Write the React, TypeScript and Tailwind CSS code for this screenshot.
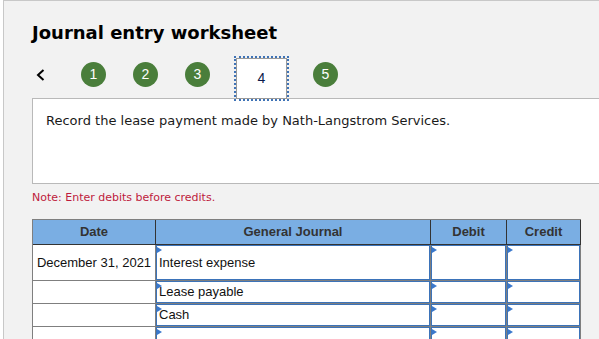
import React from 'react';

const rows = [
    { date: 'December 31, 2021', account: 'Interest expense', tall: true },
    { date: '', account: 'Lease payable', tall: false },
    { date: '', account: 'Cash', tall: false },
    { date: '', account: '', tall: false },
];

const Flag: React.FC = () => (
    <span className="absolute left-0 top-[1px] w-0 h-0 border-y-[3px] border-y-transparent border-l-[5px] border-l-[#3a78cc]"></span>
);

const InputCell: React.FC<{ text?: string; width: string }> = ({ text, width }) => (
    <div className={`${width} border-r border-b border-[#7f7f7f] h-full`}>
        <div className="relative h-full border border-[#3b73b9] flex items-center pl-[2px] text-[13px] text-[#111]">
            <Flag />
            {text}
        </div>
    </div>
);

const App: React.FC = () => {
    return (
        <div className="w-[599px] h-[339px] overflow-hidden bg-white font-['DejaVu_Sans',sans-serif]">
            <div className="ml-[3px] h-full border-l border-t border-[#c8c8c8] bg-[#f2f2f2] pl-[28px]">
                <h1 className="mt-[21px] text-[18px] leading-[22px] font-bold text-black">Journal entry worksheet</h1>

                <div className="relative z-10 mt-[14px] h-[40px] flex items-start">
                    <svg className="mt-[11px] ml-[4px]" width="9" height="12" viewBox="0 0 9 12">
                        <polyline points="7.5,1 2,6 7.5,11" fill="none" stroke="#000" strokeWidth="2" />
                    </svg>
                    {[1, 2, 3].map((n) => (
                        <div
                            key={n}
                            className={`${n === 1 ? 'ml-[36px]' : 'ml-[27px]'} mt-[4px] w-[25px] h-[25px] rounded-full bg-[#4a7e3b] text-white text-[14px] flex items-center justify-center font-['Liberation_Sans',sans-serif]`}
                        >
                            {n}
                        </div>
                    ))}
                    <div className="ml-[26px] w-[51px] h-[41px] bg-white border border-[#9a9a9a] outline-2 outline-dotted outline-[#3f73b6] flex items-center justify-center text-[14px] text-[#0b1a4a] font-['Liberation_Sans',sans-serif]">
                        4
                    </div>
                    <div className="ml-[26px] mt-[4px] w-[25px] h-[25px] rounded-full bg-[#4a7e3b] text-white text-[14px] flex items-center justify-center font-['Liberation_Sans',sans-serif]">
                        5
                    </div>
                </div>

                <div className="w-[600px] h-[86px] bg-white border border-[#b9b9b9] pl-[13px] pt-[14px] text-[13px] leading-[16px] text-[#1a1a1a]">
                    Record the lease payment made by Nath-Langstrom Services.
                </div>

                <p className="mt-[7px] text-[11px] leading-[14px] text-[#be1a3c]">Note: Enter debits before credits.</p>

                <div className="mt-[14px] w-[549px] border-l border-t border-[#7f7f7f] font-['Liberation_Sans',sans-serif]">
                    <div className="flex h-[25px] bg-[#7aaee3] text-[13px] font-bold text-[#333]">
                        <div className="w-[123px] border-r border-b border-[#333] flex items-center justify-center">Date</div>
                        <div className="w-[275px] border-r border-b border-[#333] flex items-center justify-center">General Journal</div>
                        <div className="w-[76px] border-r border-b border-[#333] flex items-center justify-center">Debit</div>
                        <div className="w-[74px] border-r border-b border-[#333] flex items-center justify-center">Credit</div>
                    </div>
                    {rows.map((row, i) => (
                        <div key={i} className={`flex bg-white ${row.tall ? 'h-[36px]' : 'h-[23px]'}`}>
                            <div className="w-[123px] border-r border-b border-[#7f7f7f] flex items-center justify-center text-[13px] text-[#111]">
                                {row.date}
                            </div>
                            <InputCell width="w-[275px]" text={row.account} />
                            <InputCell width="w-[76px]" />
                            <InputCell width="w-[74px]" />
                        </div>
                    ))}
                </div>
            </div>
        </div>
    );
};

export default App;
